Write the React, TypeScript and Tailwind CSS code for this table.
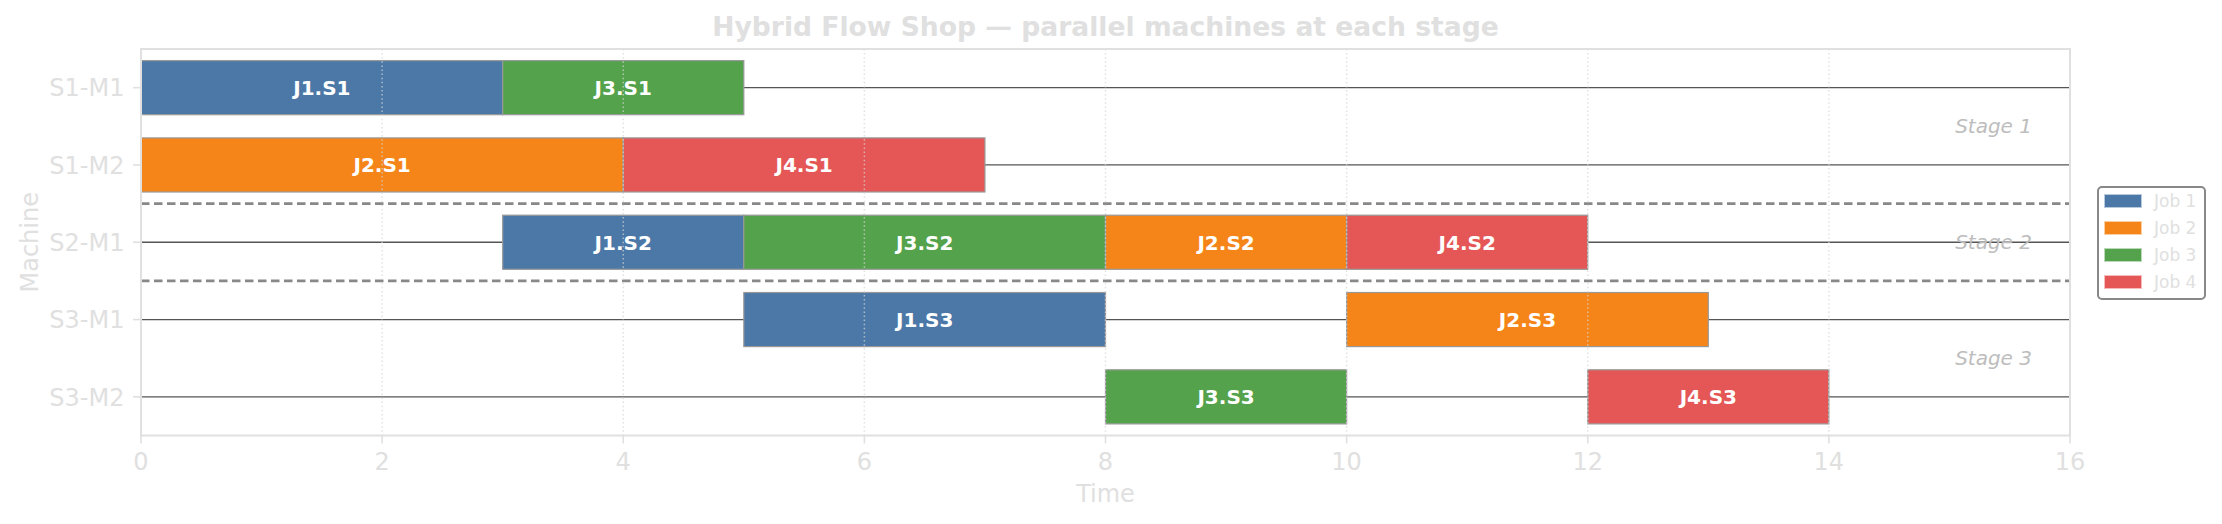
const COLORS = ["#4c78a8", "#f58518", "#54a24b", "#e45756"]

type Op = { job: number; stage: number; row: number; start: number; end: number }

const machines = ["S1-M1", "S1-M2", "S2-M1", "S3-M1", "S3-M2"]

const ops: Op[] = [
  { job: 1, stage: 1, row: 0, start: 0, end: 3 },
  { job: 3, stage: 1, row: 0, start: 3, end: 5 },
  { job: 2, stage: 1, row: 1, start: 0, end: 4 },
  { job: 4, stage: 1, row: 1, start: 4, end: 7 },
  { job: 1, stage: 2, row: 2, start: 3, end: 5 },
  { job: 3, stage: 2, row: 2, start: 5, end: 8 },
  { job: 2, stage: 2, row: 2, start: 8, end: 10 },
  { job: 4, stage: 2, row: 2, start: 10, end: 12 },
  { job: 1, stage: 3, row: 3, start: 5, end: 8 },
  { job: 2, stage: 3, row: 3, start: 10, end: 13 },
  { job: 3, stage: 3, row: 4, start: 8, end: 10 },
  { job: 4, stage: 3, row: 4, start: 12, end: 14 },
]

// plot frame, in page pixels
const LEFT = 141
const RIGHT = 2070
const TOP = 49
const ROW = 77.3
const BOTTOM = TOP + ROW * 5
const x = (t: number) => LEFT + (t * (RIGHT - LEFT)) / 16
const yc = (row: number) => TOP + ROW * (row + 0.5)
const BAR = ROW * 0.7

const stages = [
  { label: "Stage 1", y: TOP + ROW },
  { label: "Stage 2", y: yc(2) },
  { label: "Stage 3", y: TOP + ROW * 4 },
]

function GanttPlot() {
  const ticks = [0, 2, 4, 6, 8, 10, 12, 14, 16]
  return (
    <svg width={2090} height={440} viewBox="0 40 2090 440" fontFamily="'DejaVu Sans', sans-serif" className="shrink-0">
      {machines.map((_, i) => (
        <line key={i} x1={LEFT} x2={RIGHT} y1={yc(i)} y2={yc(i)} stroke="#555" strokeWidth={1.3} />
      ))}

      {ops.map((op) => (
        <g key={`${op.job}-${op.stage}`}>
          <rect
            x={x(op.start)}
            y={yc(op.row) - BAR / 2}
            width={x(op.end) - x(op.start)}
            height={BAR}
            fill={COLORS[op.job - 1]}
            stroke="#999"
            strokeWidth={1.2}
          />
          <text
            x={(x(op.start) + x(op.end)) / 2}
            y={yc(op.row) + 7.3}
            textAnchor="middle"
            fontSize={20}
            fontWeight="bold"
            fill="#fff"
          >
            J{op.job}.S{op.stage}
          </text>
        </g>
      ))}

      {/* stage separators */}
      {[2, 3].map((r) => (
        <line
          key={r}
          x1={LEFT}
          x2={RIGHT}
          y1={TOP + ROW * r}
          y2={TOP + ROW * r}
          stroke="#888"
          strokeWidth={2.6}
          strokeDasharray="8.5 4.5"
        />
      ))}

      {ticks.slice(1, -1).map((t) => (
        <line
          key={t}
          x1={x(t)}
          x2={x(t)}
          y1={TOP}
          y2={BOTTOM}
          stroke="#d6d6d6"
          strokeOpacity={0.7}
          strokeWidth={1.5}
          strokeDasharray="1.5 2.6"
        />
      ))}

      {stages.map((s) => (
        <text key={s.label} x={2032} y={s.y + 7} textAnchor="end" fontSize={20} fontStyle="italic" fill="#bdbdbd">
          {s.label}
        </text>
      ))}

      <rect x={LEFT} y={TOP} width={RIGHT - LEFT} height={BOTTOM - TOP} fill="none" stroke="#e0e0e0" strokeWidth={2} />

      {ticks.map((t) => (
        <g key={t}>
          <line x1={x(t)} x2={x(t)} y1={BOTTOM} y2={BOTTOM + 8} stroke="#e0e0e0" strokeWidth={1.6} />
          <text x={x(t)} y={470.4} textAnchor="middle" fontSize={24} fill="#e0e0e0">
            {t}
          </text>
        </g>
      ))}

      {machines.map((m, i) => (
        <g key={m}>
          <line x1={LEFT - 8} x2={LEFT} y1={yc(i)} y2={yc(i)} stroke="#e0e0e0" strokeWidth={1.6} />
          <text x={124.5} y={yc(i) + 8.75} textAnchor="end" fontSize={24} fill="#e0e0e0">
            {m}
          </text>
        </g>
      ))}

      <text
        transform={`translate(37.5 ${(TOP + BOTTOM) / 2}) rotate(-90)`}
        textAnchor="middle"
        fontSize={24}
        fill="#e0e0e0"
      >
        Machine
      </text>
    </svg>
  )
}

function Legend() {
  return (
    <div className="ml-[7px] mt-[145.5px] flex h-[114px] w-[109px] flex-col self-start rounded-[5px] border-2 border-[#888] bg-white pl-[5px]">
      {COLORS.map((c, i) => (
        <div key={c} className="flex h-[27px] shrink-0 items-center">
          <span className="block h-[14px] w-[38px] shrink-0 border border-white/60" style={{ backgroundColor: c }} />
          <span className="ml-[12px] text-[17px] leading-[17px] text-[#e0e0e0]">Job {i + 1}</span>
        </div>
      ))}
    </div>
  )
}

export default function App() {
  return (
    <div className="flex h-[524px] w-[2222px] flex-col bg-white font-['DejaVu_Sans',sans-serif] text-[#e0e0e0]">
      <div className="h-[40px] shrink-0 pl-[141px] pt-[13px]">
        <h1 className="w-[1929px] text-center text-[26.6px] font-bold leading-[28px]">
          Hybrid Flow Shop — parallel machines at each stage
        </h1>
      </div>
      <div className="flex h-[440px] shrink-0">
        <GanttPlot />
        <Legend />
      </div>
      <div className="pl-[141px]">
        <p className="w-[1929px] text-center text-[24px] leading-[28px]">Time</p>
      </div>
    </div>
  )
}
